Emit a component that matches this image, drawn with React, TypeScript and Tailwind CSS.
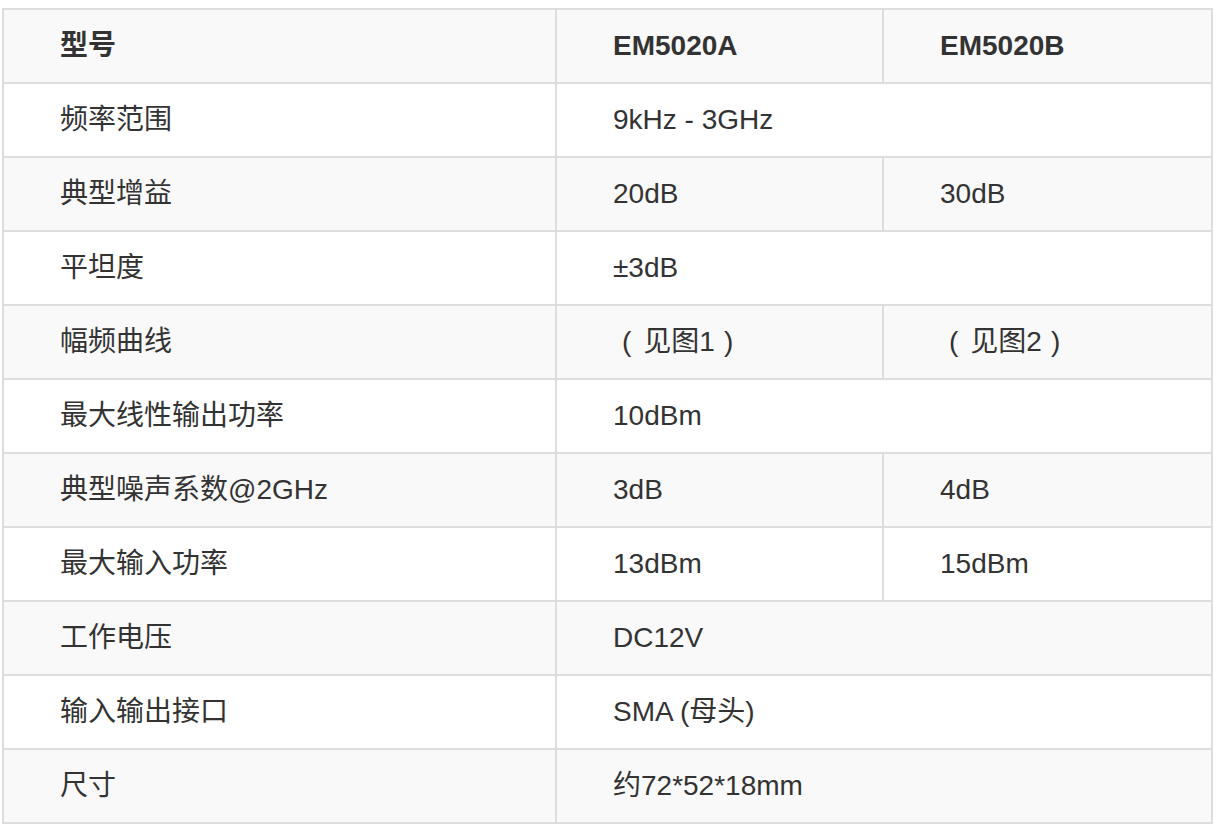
import type { ReactNode } from 'react'

const fig = (n: number) => (
  <>
    <span className="pl-[9px] pr-[12px]">(</span>见图{n}
    <span className="pl-[9px]">)</span>
  </>
)

const rows: { label: string; a: ReactNode; b?: ReactNode }[] = [
  { label: '频率范围', a: '9kHz - 3GHz' },
  { label: '典型增益', a: '20dB', b: '30dB' },
  { label: '平坦度', a: '±3dB' },
  { label: '幅频曲线', a: fig(1), b: fig(2) },
  { label: '最大线性输出功率', a: '10dBm' },
  { label: '典型噪声系数@2GHz', a: '3dB', b: '4dB' },
  { label: '最大输入功率', a: '13dBm', b: '15dBm' },
  { label: '工作电压', a: 'DC12V' },
  { label: '输入输出接口', a: 'SMA (母头)' },
  { label: '尺寸', a: '约72*52*18mm' },
]

const cell = 'border-2 border-[#dddddd] h-[74px] pl-[56px] pr-4 align-middle text-left whitespace-nowrap'

export default function App() {
  return (
    <div
      className="min-h-screen bg-white pt-[8px] pl-[2px] text-[28px] text-[#333333]"
      style={{ fontFamily: '"Liberation Sans", "Noto Sans CJK SC", sans-serif' }}
    >
      <table className="border-collapse w-[1209px] table-fixed">
        <colgroup>
          <col className="w-[553px]" />
          <col className="w-[327px]" />
          <col className="w-[329px]" />
        </colgroup>
        <thead>
          <tr className="bg-[#f9f9f9]">
            <th className={`${cell} font-bold`}>型号</th>
            <th className={`${cell} font-bold`}>EM5020A</th>
            <th className={`${cell} font-bold`}>EM5020B</th>
          </tr>
        </thead>
        <tbody>
          {rows.map((r, i) => (
            <tr key={r.label} className={i % 2 === 1 ? 'bg-[#f9f9f9]' : 'bg-white'}>
              <td className={cell}>{r.label}</td>
              {r.b ? (
                <>
                  <td className={cell}>{r.a}</td>
                  <td className={cell}>{r.b}</td>
                </>
              ) : (
                <td className={cell} colSpan={2}>
                  {r.a}
                </td>
              )}
            </tr>
          ))}
        </tbody>
      </table>
    </div>
  )
}
